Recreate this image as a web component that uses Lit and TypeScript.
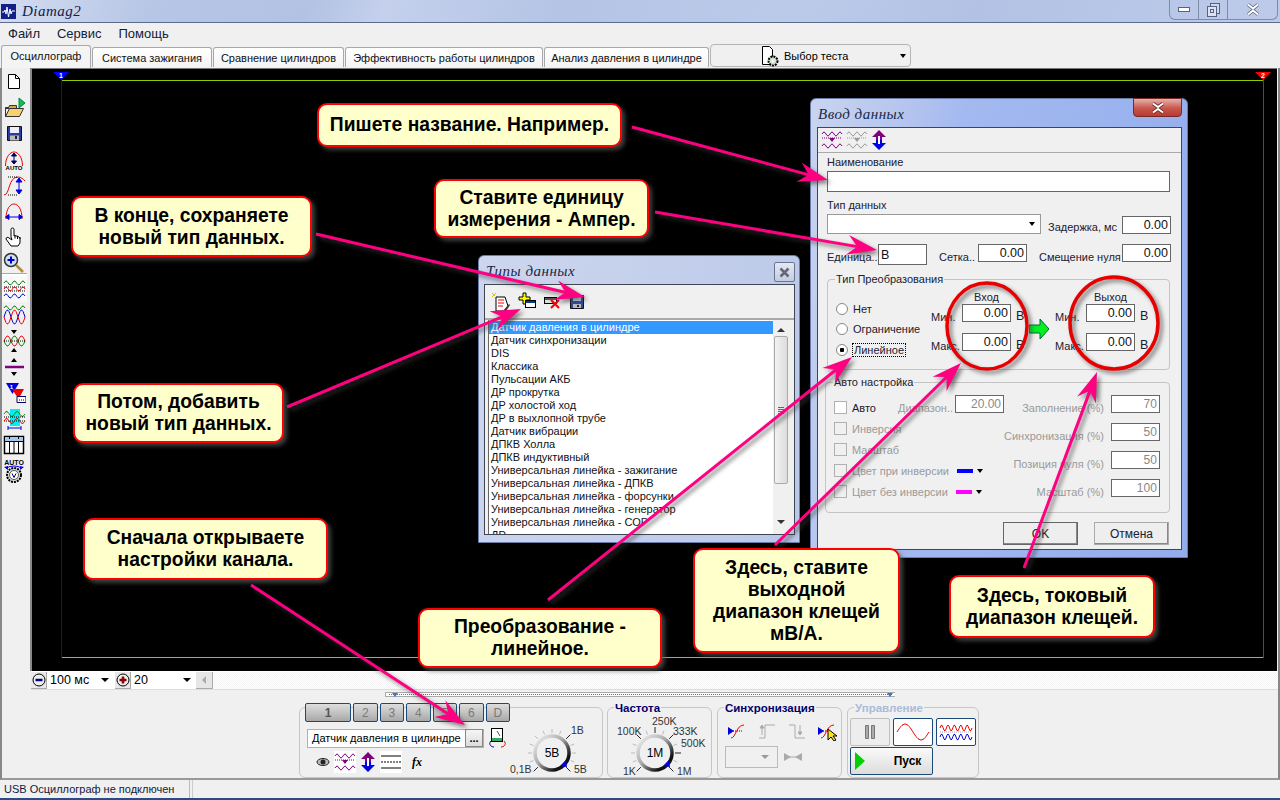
import { LitElement, html, css, svg } from "lit";
import { customElement } from "lit/decorators.js";

// sine path, sampled every pixel
const wave = (x: number, y: number, w: number, amp: number, periods: number, phase = 0) => {
  let d = "";
  for (let i = 0; i <= w; i++) {
    const v = y - Math.sin((i / w) * periods * Math.PI * 2 + phase) * amp;
    d += `${i ? "L" : "M"}${(x + i).toFixed(1)} ${v.toFixed(1)}`;
  }
  return d;
};

const ic = (size: number, body: unknown, h = size) =>
  html`<svg width=${size} height=${h} viewBox="0 0 ${size} ${h}">${body}</svg>`;

const threeWaves = (dim = false) => {
  const a = dim ? "#999" : "#800080";
  return ic(
    22,
    svg`<path d=${wave(1, 5, 20, 2, 2.5)} fill="none" stroke=${a}/>
      <path d="M1 9h20" stroke=${a} stroke-dasharray="1 1"/>
      <path d="M8 9h6l-3 4z" fill=${a}/>
      <path d=${wave(1, 17, 20, 2, 2.5)} fill="none" stroke=${a}/>`
  );
};

const updown = () =>
  ic(
    16,
    svg`<path d="M8 1l7 7h-4v3H5V8H1z" fill="#800080"/><path d="M8 21l7-7h-4v-3H5v3H1z" fill="#0000e0"/>
      <path d="M7 7h2v8H7z" fill="#fff"/>`,
    22
  );

const sideIcons = [
  svg`<path d="M6.5 5.5h7l4 4v10h-11z" fill="#fff" stroke="#000"/><path d="M13.5 5.5v4h4" fill="none" stroke="#000"/>`,
  svg`<path d="M3.5 12.5h3l1-2h7v3h-11z M3.5 21.5v-9" fill="#d9a93a" stroke="#333"/>
    <path d="M3.5 21.5l4-8h14l-4 8z" fill="#f6d071" stroke="#333"/><path d="M17 3l6 5-6 5z" fill="#10c040" stroke="#085"/>`,
  svg`<path d="M5.5 5.5h14v14h-14z" fill="#2b3c9f" stroke="#111"/><path d="M8 6h9v6H8z" fill="#eef"/>
    <path d="M8 14.500h9v5H8z" fill="#bbb"/><path d="M13 15h2v3h-2z" fill="#223"/>`,
  svg`<path d="M3.500 19C3.500 10 8 5 12 5s8.500 5 8.500 14" fill="none" stroke="#e00"/>
    <path d="M12 6.500v10M9.500 9L12 6l2.500 3zM9.500 14l2.500 3 2.500-3z" stroke="#006" fill="#006"/>
    <text x="12" y="23" class="tiny" text-anchor="middle">AUTO</text>`,
  svg`<path d="M2 22c6 0 4-18 14-18 3 0 5 2 7 4" fill="none" stroke="#e00"/><path d="M6 4h10M6 22h10" stroke="#000" stroke-dasharray="1 1"/>
    <path d="M17 6v14M14 9l3-4 3 4zM14 17l3 4 3-4z" stroke="#00d" fill="#00d"/>`,
  svg`<path d="M4 20C4 10 8 5 12 5s8 5 8 15" fill="none" stroke="#e00"/><path d="M4 18h16M7 15.500L3.500 18 7 20.500zM17 15.500l3.500 2.500-3.500 2.500z" stroke="#00d" fill="#00d"/>`,
  svg`<path d="M9 12V4.500a1.500 1.500 0 013 0V11l1-.5 1 .5 1 0 1 .5 1 .5 1 1v5l-2 3h-7l-5-7c0-2 2-2 3-1l3 2z" fill="#fff" stroke="#000"/>
    <path d="M13 10.500v3M15.500 11v3M18 12v2" stroke="#000" fill="none"/>`,
  svg`<circle cx="9" cy="9" r="6.500" fill="#cfe2f5" stroke="#333" stroke-width="1.500"/><path d="M9 5.500v7M5.500 9h7" stroke="#0000c0" stroke-width="2"/>
    <path d="M14 14l7 7" stroke="#b08b40" stroke-width="2.500"/>`,
  svg`<path d=${wave(2, 6, 21, 2, 2.5)} fill="none" stroke="#008000"/><path d="M2 10h21M2 14h21" stroke="#000" stroke-dasharray="1 1"/>
    <path d=${wave(2, 12, 21, 2, 2.5)} fill="none" stroke="#e00"/><path d=${wave(2, 19, 21, 2, 2.5)} fill="none" stroke="#00d"/>`,
  svg`<path d=${wave(2, 5, 21, 2, 2.5)} fill="none" stroke="#008000"/><path d=${wave(2, 14, 21, 7, 1.5)} fill="none" stroke="#00d"/>
    <path d=${wave(2, 14, 21, 7, 1.5, Math.PI)} fill="none" stroke="#e00"/>`,
  svg`<path d="M9 1h6l-3 4zM9 23h6l-3-4z" fill="#000"/><path d=${wave(2, 12, 21, 5, 1.5)} fill="none" stroke="#e00"/>
    <path d=${wave(2, 12, 21, 5, 1.5, Math.PI)} fill="none" stroke="#008000"/><path d="M2 12h21" stroke="#000" stroke-dasharray="1 1"/>`,
  svg`<path d="M9 7l3-4 3 4zM9 17l3 4 3-4z" fill="#000"/><path d="M3 12h19" stroke="#800080" stroke-width="2.500"/>`,
  svg`<path d="M4 2h13l-6.500 11z" fill="#0000e0"/><path d="M10 8h12l-5.500 10z" fill="#e00"/>
    <path d="M15 15.500h9v6h-9z" fill="#fff" stroke="#006"/><path d="M17 19h5" stroke="#006" stroke-dasharray="1 1"/>
    <text x="9.500" y="8" class="tiny w" text-anchor="middle">1</text>`,
  svg`<path d="M8 2h10v17H8z" fill="#00f0f0"/><path d=${wave(2, 7, 21, 2.500, 2)} fill="none" stroke="#008000"/>
    <path d="M2 10h21M2 14h21" stroke="#000" stroke-dasharray="1 1"/><path d=${wave(2, 14, 21, 2.500, 2)} fill="none" stroke="#e00"/>
    <path d="M6 21h13M6 19v4M19 19v4" stroke="#00d"/>`,
  svg`<path d="M2.500 3.500h19v17h-19z" fill="#fff" stroke="#000" stroke-width="1.500"/><path d="M3 4h18v4H3z" fill="#a8c8f0"/>
    <path d="M3 8.500h18M7.500 8v12M12 8v12M16.500 8v12M7.500 4v2M16.500 4v2" stroke="#000"/>`,
  svg`<text x="12" y="6" class="tiny l" text-anchor="middle">AUTO</text><path d="M4 9q8-4 16 0" fill="none" stroke="#00d"/>
    <path d="M2 8l4-1v4zM22 8l-4-1v4z" fill="#00d"/>
    <circle cx="12" cy="16" r="7" fill="#ddd" stroke="#000" stroke-width="2" stroke-dasharray="2 1"/><circle cx="12" cy="16" r="4.500" fill="#fff" stroke="#555"/>
    <path d="M10 14.500l2 4 2-4" fill="none" stroke="#006"/>`,
];

const knob = (cx: number, cy: number, w: number, h: number, center: string, labels: [string, number, number][], marks: number[]) =>
  html`<svg class="knob" width=${w} height=${h} viewBox="0 0 ${w} ${h}">
    <defs>
      <linearGradient id="ring" x1="0" y1="0" x2="1" y2="1">
        <stop offset="0" stop-color="#f4f4f4"/><stop offset=".45" stop-color="#aaa"/><stop offset=".8" stop-color="#111"/>
      </linearGradient>
    </defs>
    ${[-135, -112, -90, -68, -45, -22, 0, 22, 45, 68, 90, 112, 135].map((deg) => {
      const a = ((deg - 90) * Math.PI) / 180;
      const major = marks.includes(deg);
      const r2 = major ? 26 : 24;
      return svg`<line x1=${cx + Math.cos(a) * 20} y1=${cy + Math.sin(a) * 20} x2=${cx + Math.cos(a) * r2} y2=${cy + Math.sin(a) * r2}
        stroke=${major ? "#222" : "#bbb"}/>`;
    })}
    <circle cx=${cx} cy=${cy} r="17" fill="#f0f0f0" stroke="url(#ring)" stroke-width="3.500"/>
    <path d="M${cx + 8} ${cy + 13}l6-6 1 7z" fill="#0000e0"/>
    <text x=${cx} y=${cy + 4} class="kc" text-anchor="middle">${center}</text>
    ${labels.map(([t, x, y]) => svg`<text x=${x} y=${y} class="kl">${t}</text>`)}
  </svg>`;

const listRows = [
  "Датчик давления в цилиндре",
  "Датчик синхронизации",
  "DIS",
  "Классика",
  "Пульсации АКБ",
  "ДР прокрутка",
  "ДР холостой ход",
  "ДР в выхлопной трубе",
  "Датчик вибрации",
  "ДПКВ Холла",
  "ДПКВ индуктивный",
  "Универсальная линейка - зажигание",
  "Универсальная линейка - ДПКВ",
  "Универсальная линейка - форсунки",
  "Универсальная линейка - генератор",
  "Универсальная линейка - СОР",
  "ДР",
];

const callouts: { x: number; y: number; w: number; h: number; t: string[] }[] = [
  { x: 317, y: 103, w: 305, h: 44, t: ["Пишете название. Например."] },
  { x: 434, y: 179, w: 215, h: 59, t: ["Ставите единицу", "измерения - Ампер."] },
  { x: 71, y: 196, w: 241, h: 61, t: ["В конце, сохраняете", "новый тип данных."] },
  { x: 73, y: 383, w: 211, h: 60, t: ["Потом, добавить", "новый тип данных."] },
  { x: 83, y: 518, w: 245, h: 62, t: ["Сначала открываете", "настройки канала."] },
  { x: 418, y: 608, w: 244, h: 60, t: ["Преобразование -", "линейное."] },
  { x: 693, y: 548, w: 207, h: 105, t: ["Здесь, ставите", "выходной", "диапазон клещей", "мВ/А."] },
  { x: 949, y: 575, w: 206, h: 63, t: ["Здесь, токовый", "диапазон клещей."] },
];

const arrows = [
  [632, 127, 828, 180],
  [655, 212, 877, 250],
  [316, 234, 585, 297],
  [287, 407, 521, 309],
  [251, 585, 465, 725],
  [548, 600, 852, 357],
  [775, 545, 961, 363],
  [1024, 568, 1097, 372],
];

const arrow = ([x1, y1, x2, y2]: number[]) => {
  const l = Math.hypot(x2 - x1, y2 - y1);
  const ux = (x2 - x1) / l;
  const uy = (y2 - y1) / l;
  const p = (along: number, side: number) => `${x2 - ux * along - uy * side},${y2 - uy * along + ux * side}`;
  return svg`<line x1=${x1} y1=${y1} x2=${x2 - ux * 14} y2=${y2 - uy * 14} stroke="#ff0080" stroke-width="3"/>
    <polygon points="${p(0, 0)} ${p(30, 10)} ${p(20, 0)} ${p(30, -10)}" fill="#ff0080"/>`;
};

@customElement("app-root")
export class AppRoot extends LitElement {
  static styles = css`
    :host {
      display: block;
      width: 1280px;
      height: 800px;
      overflow: hidden;
      font-family: "Liberation Sans", Tahoma, sans-serif;
      font-size: 11px;
      color: #000;
      background: #f0f0f0;
    }
    .app {
      position: relative;
      display: flex;
      flex-direction: column;
      width: 1280px;
      height: 800px;
    }
    .tiny {
      font: bold 6px "Liberation Sans", sans-serif;
      fill: #000;
    }
    .tiny.w {
      fill: #fff;
    }
    .tiny.l {
      font-size: 7px;
    }

    /* window chrome */
    .title {
      flex: none;
      display: flex;
      align-items: flex-start;
      justify-content: space-between;
      height: 22px;
      border-bottom: 1px solid #5d6b8c;
      background: linear-gradient(108deg, #d3dcf0 0, #b7c6e6 12%, #b3c2e3 24%, #c4d0ec 30%, #b5c4e5 44%, #bccaea 62%, #b3c2e4 76%, #bdcaea 100%);
    }
    .title-left {
      display: flex;
      align-items: center;
      gap: 6px;
      height: 22px;
      padding-left: 1px;
    }
    .logo {
      display: block;
    }
    .app-name {
      font: italic 15px "Liberation Serif", serif;
      color: #10204a;
      letter-spacing: 0.5px;
    }
    .winbtns {
      display: flex;
      height: 19px;
      margin-right: 2px;
      border: 1px solid #7e8ca8;
      border-top: 0;
      border-radius: 0 0 6px 6px;
    }
    .winbtns > div {
      display: flex;
      align-items: center;
      justify-content: center;
      width: 28px;
      border-left: 1px solid #7e8ca8;
    }
    .winbtns > div:first-child {
      border-left: 0;
    }
    .winbtns > div:last-child {
      width: 49px;
    }
    .menu {
      flex: none;
      display: flex;
      gap: 17px;
      align-items: center;
      height: 21px;
      padding-left: 8px;
      font-size: 13px;
      color: #10203a;
    }
    .tabs {
      flex: none;
      display: flex;
      align-items: flex-end;
      height: 24px;
      padding-left: 1px;
      gap: 1px;
    }
    .tab {
      display: flex;
      align-items: center;
      justify-content: center;
      box-sizing: border-box;
      height: 20px;
      margin-bottom: 1px;
      background: linear-gradient(#fff, #f4f4f4);
      border: 1px solid #a8a8a8;
      border-bottom: 0;
      border-radius: 3px 3px 0 0;
      color: #111;
    }
    .tab.active {
      height: 23px;
      margin-bottom: 0;
      background: #f4f4f4;
      padding-bottom: 2px;
    }
    .test-pick {
      display: flex;
      align-items: center;
      width: 201px;
      height: 23px;
      box-sizing: border-box;
      align-self: flex-start;
      border: 1px solid #b4b4b4;
      border-radius: 4px;
      padding-left: 48px;
      gap: 3px;
    }
    .test-pick .caret {
      margin-left: auto;
      margin-right: 4px;
    }
    .caret {
      width: 0;
      height: 0;
      border: 3.500px solid transparent;
      border-top: 4px solid #000;
      border-bottom: 0;
      flex: none;
    }

    .main {
      flex: 1;
      display: flex;
      min-height: 0;
      border-left: 2px solid #888;
      border-right: 2px solid #888;
    }
    .sidebar {
      flex: none;
      display: flex;
      flex-direction: column;
      width: 28px;
    }
    .sb {
      display: flex;
      align-items: center;
      height: 26px;
      width: 25px;
    }
    .sb.sep {
      border-top: 2px solid #fff;
      box-shadow: 0 -1px 0 #aaa;
      margin-top: -2px;
      background: #f9f9f9;
    }
    .center {
      flex: 1;
      display: flex;
      flex-direction: column;
      min-width: 0;
    }
    .scope {
      flex: 1;
      position: relative;
      background: #000;
      border-top: 1px solid #777;
      border-left: 2px solid #888;
      margin-right: 1px;
    }
    .h-top,
    .h-bot {
      position: absolute;
      left: 30px;
      width: 1202px;
      height: 1px;
      background: #96c800;
    }
    .h-top {
      top: 11px;
    }
    .h-bot {
      top: 588px;
    }
    .v-l,
    .v-r {
      position: absolute;
      top: 6px;
      width: 1px;
      height: 583px;
    }
    .v-l {
      left: 29px;
      background: #0000ff;
    }
    .v-r {
      left: 1231px;
      background: #ff0000;
    }
    .mark {
      position: absolute;
      top: 3px;
      width: 16px;
      height: 8px;
      clip-path: polygon(0 0, 100% 0, 50% 100%);
      color: #fff;
      font: bold 7px/7px "Liberation Sans", sans-serif;
      text-align: center;
    }
    .mark.l {
      left: 21px;
      background: #0000ff;
    }
    .mark.r {
      left: 1223px;
      background: #ff0000;
    }
    .timebar {
      flex: none;
      display: flex;
      align-items: center;
      height: 18px;
      margin-left: 1px;
      border-bottom: 1px solid #ddd;
      background: #fff;
      font-size: 12.500px;
    }
    .tbtn {
      display: flex;
      align-items: center;
      justify-content: center;
      box-sizing: border-box;
      width: 16px;
      height: 17px;
      background: #e8e8e8;
      border-right: 1px solid #aaa;
      border-bottom: 1px solid #aaa;
    }
    .tval {
      display: flex;
      align-items: center;
      justify-content: space-between;
      width: 68px;
      padding: 0 6px 0 3px;
      box-sizing: border-box;
    }
    .tval.short {
      width: 65px;
      padding-right: 5px;
    }
    .tval .caret {
      border-width: 4px;
      border-top-width: 4px;
      border-bottom: 0;
    }
    .tscroll {
      flex: 1;
      height: 17px;
      background: repeating-conic-gradient(#f4f4f4 0 25%, #fff 0 50%) 0 0 / 2px 2px;
    }
    .tleft {
      display: flex;
      align-items: center;
      justify-content: center;
      box-sizing: border-box;
      width: 17px;
      height: 17px;
      background: #e6e6e6;
      border-right: 1px solid #aaa;
      border-bottom: 1px solid #aaa;
    }
    .tri-l {
      width: 0;
      height: 0;
      border: 4px solid transparent;
      border-right: 4px solid #aaa;
      border-left: 0;
    }

    /* bottom controls */
    .panel {
      flex: none;
      height: 90px;
      display: flex;
      flex-direction: column;
      border-left: 2px solid #888;
      border-right: 2px solid #888;
      border-bottom: 2px solid #999;
      box-sizing: border-box;
    }
    .range {
      align-self: flex-start;
      position: relative;
      margin: 2px 0 0 383px;
      width: 510px;
      height: 5px;
      box-sizing: border-box;
      border: 1px solid #aaa;
      border-right: 0;
      background: #fff;
    }
    .range::before {
      content: "";
      display: block;
      margin: 1px 3px;
      border-top: 1px dotted #3a78c8;
    }
    .rt {
      position: absolute;
      top: 0;
      width: 0;
      height: 0;
      border: 3px solid transparent;
      border-top: 4px solid #3a78c8;
      border-bottom: 0;
    }
    .rt.a {
      left: 6px;
    }
    .rt.b {
      right: 2px;
    }
    .groups {
      display: flex;
      gap: 4px;
      margin: 10px 0 0 297px;
      height: 71px;
    }
    .grp {
      position: relative;
      box-sizing: border-box;
      border: 1px solid #c6c6c6;
      border-radius: 6px;
      height: 71px;
    }
    .legend {
      position: absolute;
      top: -5px;
      left: 6px;
      padding: 0 1px;
      background: #f0f0f0;
      font: bold 11.500px/11px "Liberation Sans", sans-serif;
      color: #00006a;
    }
    .legend.off {
      color: #a9bcd8;
    }
    .g-ch {
      width: 304px;
      display: flex;
    }
    .g-fr {
      width: 105px;
    }
    .g-sy {
      width: 125px;
      margin-left: 1px;
    }
    .g-ct {
      width: 132px;
      margin-left: 1px;
    }
    .ch-left {
      flex: none;
      box-sizing: border-box;
      width: 210px;
      padding-left: 5px;
    }
    .ch-btns {
      display: flex;
      gap: 2px;
      margin-top: -5px;
    }
    .ch-btn {
      display: flex;
      align-items: center;
      justify-content: center;
      box-sizing: border-box;
      width: 25px;
      height: 19px;
      border: 1px solid #1c4a78;
      border-radius: 2px;
      background: linear-gradient(#dedede, #a8a8a8);
      color: #7a7a7a;
      font-size: 12px;
    }
    .ch-btn.first {
      width: 47px;
      color: #555;
      font-weight: bold;
    }
    .ch-row {
      display: flex;
      align-items: center;
      margin: 6px 0 0 2px;
      gap: 4px;
    }
    .combo {
      display: flex;
      align-items: center;
      justify-content: space-between;
      box-sizing: border-box;
      width: 177px;
      height: 19px;
      padding-left: 4px;
      border: 1px solid #b0b0b0;
      background: #fff;
      white-space: nowrap;
    }
    .dots {
      display: flex;
      align-items: center;
      justify-content: center;
      box-sizing: border-box;
      width: 18px;
      height: 18px;
      background: linear-gradient(#f6f6f6, #dcdcdc);
      border: 1px solid #888;
      font-weight: bold;
      line-height: 8px;
    }
    .ch-tools {
      display: flex;
      align-items: center;
      gap: 4px;
      margin: 3px 0 0 11px;
    }
    .ch-tools .on {
      background: #fff;
      display: flex;
    }
    .fx {
      font: italic bold 12px "Liberation Serif", serif;
      margin-left: 6px;
    }
    .knob {
      display: block;
    }
    .kc {
      font: 12px "Liberation Sans", sans-serif;
      fill: #000;
    }
    .kl {
      font: 10.500px "Liberation Sans", sans-serif;
      fill: #333;
    }
    .g-ch .knob {
      margin: 14px 0 0 0;
    }
    .sy-row {
      display: flex;
      align-items: center;
      gap: 10px;
      padding: 13px 0 0 9px;
    }
    .sy-row.two {
      padding: 5px 0 0 7px;
      gap: 5px;
    }
    .sy-combo {
      display: flex;
      align-items: center;
      justify-content: flex-end;
      box-sizing: border-box;
      width: 53px;
      height: 22px;
      padding-right: 8px;
      border: 1px solid #bbb;
    }
    .sy-combo .caret {
      border-top-color: #999;
      border-width: 4px;
      border-bottom: 0;
    }
    .ct {
      display: grid;
      grid-template-columns: 40px 40px 40px;
      gap: 1px 3px;
      padding: 10px 0 0 2px;
    }
    .ct-btn {
      display: flex;
      align-items: center;
      justify-content: center;
      box-sizing: border-box;
      height: 28px;
      border: 1px solid #1c4a78;
      border-radius: 2px;
      background: #fff;
    }
    .ct-btn.grey {
      border-color: #c0c0c0;
      background: #ededed;
    }
    .ct-btn.run {
      grid-column: span 2;
      height: 28px;
      gap: 28px;
      padding-right: 8px;
      background: linear-gradient(#fafafa, #dcdcdc);
      font-weight: bold;
      font-size: 12px;
    }
    .status {
      flex: none;
      height: 20px;
      display: flex;
      box-sizing: border-box;
      border-bottom: 2px solid #2c4a88;
      color: #10203a;
    }
    .status > div {
      display: flex;
      align-items: center;
      padding-left: 4px;
      border-right: 1px solid #bbb;
      width: 185px;
    }
    .status > div + div {
      width: auto;
      flex: 1;
      border-right: 0;
      border-left: 1px solid #ccc;
      margin-left: 2px;
    }

    /* windows, arrows and callouts sit over the scope */
    .dlg {
      position: absolute;
      box-sizing: border-box;
      display: flex;
      flex-direction: column;
      border: 1px solid #6a7da8;
      border-radius: 6px 6px 0 0;
    }
    .dlg-data {
      left: 810px;
      top: 98px;
      width: 378px;
      height: 460px;
      padding: 28px 5px 7px 6px;
      background: linear-gradient(100deg, #c9d4ef 0, #b4c4ee 22%, #a3b9f0 34%, #93adec 100%);
    }
    .dlg-types {
      left: 478px;
      top: 255px;
      width: 322px;
      height: 288px;
      padding: 28px 4px 7px 5px;
      background: linear-gradient(100deg, #cdd6ee, #bac8e8);
    }
    .dlg-title {
      position: absolute;
      top: 7px;
      left: 7px;
      font: italic 15px "Liberation Serif", serif;
      color: #182848;
      letter-spacing: 0.5px;
    }
    .x-red {
      position: absolute;
      top: -1px;
      right: 5px;
      display: flex;
      align-items: center;
      justify-content: center;
      width: 49px;
      height: 19px;
      border-radius: 0 0 4px 4px;
      border: 1px solid #7a2a24;
      box-sizing: border-box;
      background: linear-gradient(#e6b1ab, #c8564c 55%, #b83a32);
    }
    .x-grey {
      position: absolute;
      top: 6px;
      right: 4px;
      display: flex;
      align-items: center;
      justify-content: center;
      box-sizing: border-box;
      width: 21px;
      height: 20px;
      border: 1px solid #6a7590;
      border-radius: 2px;
      background: linear-gradient(#e4e8f2, #c4cce0);
    }
    .dlg-body {
      flex: 1;
      min-height: 0;
      display: flex;
      flex-direction: column;
      background: #f0f0f0;
      border: 1px solid #3e4656;
    }
    .dlg-tools {
      flex: none;
      display: flex;
      align-items: center;
      gap: 3px;
      height: 24px;
      padding-left: 3px;
      border-bottom: 1px solid #aaa;
    }
    .form {
      display: flex;
      flex-direction: column;
      padding: 0 12px 0 9px;
      color: #1a2030;
    }
    .lab {
      line-height: 14px;
      margin-top: 2px;
    }
    .lab.second {
      margin-top: 6px;
    }
    .inp {
      display: flex;
      align-items: center;
      justify-content: flex-end;
      box-sizing: border-box;
      width: 49px;
      height: 18px;
      padding: 0 2px;
      background: #fff;
      border: 1px solid #666;
      font-size: 12.500px;
      color: #111;
      flex: none;
    }
    .inp.wide {
      width: 343px;
      height: 21px;
      margin-top: 2px;
    }
    .inp.unit-in {
      justify-content: flex-start;
      height: 21px;
    }
    .row {
      display: flex;
      align-items: flex-end;
    }
    .row.top {
      align-items: flex-start;
      margin-top: 10px;
    }
    .row.top .inp + .cap {
      margin-left: 12px;
    }
    .cap {
      line-height: 14px;
      white-space: nowrap;
      flex: none;
    }
    .row.top .cap {
      padding-top: 6px;
    }
    .cmb {
      display: flex;
      align-items: center;
      justify-content: flex-end;
      flex: none;
      box-sizing: border-box;
      width: 214px;
      height: 20px;
      padding-right: 5px;
      background: #fff;
      border: 1px solid #999;
      margin-top: 2px;
    }
    .box {
      position: relative;
      flex: none;
      border: 1px solid #c4c4c4;
      border-radius: 4px;
      box-sizing: border-box;
    }
    .box > .cap-t {
      position: absolute;
      top: -7px;
      left: 7px;
      padding: 0 1px;
      line-height: 13px;
      background: #f0f0f0;
    }
    .conv {
      display: flex;
      height: 91px;
      margin-top: 14px;
      width: 343px;
    }
    .radios {
      display: flex;
      flex-direction: column;
      gap: 7px;
      width: 103px;
      padding: 22px 0 0 8px;
      box-sizing: border-box;
    }
    .rad {
      display: flex;
      align-items: center;
      gap: 5px;
      height: 13.500px;
    }
    .dot {
      box-sizing: border-box;
      width: 12px;
      height: 12px;
      border-radius: 50%;
      border: 1px solid #888;
      background: #fff;
    }
    .dot.on {
      background: radial-gradient(circle, #000 0 2px, #fff 2.500px);
    }
    .focus {
      outline: 1px dotted #000;
      padding: 0 1px;
    }
    .conv-col {
      display: flex;
      flex-direction: column;
      padding-top: 10px;
      box-sizing: border-box;
    }
    .conv-col .head {
      width: 49px;
      margin-left: 31px;
      height: 14px;
      line-height: 14px;
      text-align: center;
    }
    .conv-grid {
      display: grid;
      grid-template-columns: 31px 49px 16px;
      grid-auto-rows: 18px;
      row-gap: 11px;
      align-items: center;
    }
    .conv-grid .side {
      align-self: end;
      line-height: 12px;
      margin-bottom: -1px;
    }
    .unit {
      padding-left: 5px;
      font-size: 12.500px;
      align-self: end;
      line-height: 12px;
    }
    .conv-arrow {
      width: 20px;
      margin: 39px 6px 0 2px;
    }
    .auto {
      display: grid;
      grid-template-columns: 60px 110px 1fr;
      height: 131px;
      width: 345px;
      margin: 12px 0 0 -2px;
      padding: 12px 13px 0 8px;
      color: #9a9a9a;
    }
    .auto .cap-t {
      color: #1a2030;
    }
    .cbs {
      padding-top: 2px;
      white-space: nowrap;
    }
    .cb {
      display: flex;
      align-items: center;
      gap: 5px;
      height: 21px;
    }
    .cb > i.check {
      flex: none;
      box-sizing: border-box;
      width: 13px;
      height: 13px;
      border: 1px solid #b0b0b0;
    }
    .cb.on {
      color: #1a2030;
    }
    .cb.on > i.check {
      background: #fff;
    }
    .swatch {
      flex: none;
      width: 16px;
      height: 4px;
      margin-left: 3px;
    }
    .swatch.blue {
      background: #0000ff;
    }
    .swatch.pink {
      background: #ff00ff;
    }
    .cb .caret {
      border-width: 3px;
      border-top-width: 4px;
      border-bottom: 0;
      margin-left: -1px;
    }
    .mid {
      display: flex;
      align-items: flex-start;
      justify-content: flex-end;
      gap: 2px;
    }
    .mid .cap,
    .rcol .cap {
      line-height: 26px;
    }
    .rcol {
      display: flex;
      flex-direction: column;
      gap: 10px;
    }
    .rcol > div {
      display: flex;
      justify-content: flex-end;
      gap: 7px;
      height: 18px;
    }
    .auto .inp {
      color: #888;
      font-size: 12px;
    }
    .dlg-btns {
      display: flex;
      justify-content: flex-end;
      gap: 16px;
      margin-top: 9px;
    }
    .pbtn {
      display: flex;
      align-items: center;
      justify-content: center;
      box-sizing: border-box;
      width: 75px;
      height: 23px;
      background: #eee;
      border: 1px solid #aaa;
      box-shadow: inset -1px -1px 0 #888;
      font-size: 12px;
    }
    .pbtn.def {
      border: 1px solid #666;
    }
    .t-tools {
      flex: none;
      display: flex;
      align-items: center;
      gap: 6px;
      height: 33px;
      padding-left: 6px;
      border-bottom: 2px solid #aaa;
    }
    .t-main {
      flex: 1;
      min-height: 0;
      display: flex;
      margin: 0 5px 0 3px;
      background: #fff;
      border-left: 1px solid #666;
    }
    .t-list {
      flex: 1;
      overflow: hidden;
      padding-top: 1px;
    }
    .t-list > div {
      height: 13px;
      line-height: 13px;
      padding-left: 2px;
      color: #111;
      white-space: nowrap;
    }
    .t-list > div.sel {
      background: #3399ff;
      color: #fff;
    }
    .t-bar {
      flex: none;
      display: flex;
      flex-direction: column;
      align-items: center;
      width: 16px;
      background: #f0f0f0;
      box-sizing: border-box;
    }
    .t-thumb {
      position: relative;
      width: 14px;
      height: 148px;
      margin-top: 4px;
      box-sizing: border-box;
      border: 1px solid #aaa;
      border-radius: 2px;
      background: linear-gradient(90deg, #f2f2f2, #dcdcdc);
    }
    .t-thumb::after {
      content: "";
      position: absolute;
      left: 3px;
      top: 70px;
      width: 6px;
      height: 7px;
      background: repeating-linear-gradient(#666 0 1px, transparent 1px 2px);
    }
    .t-arr {
      width: 0;
      height: 0;
      margin-top: 8px;
      border: 4px solid transparent;
      border-bottom: 4px solid #333;
      border-top: 0;
    }
    .t-arr.d {
      margin-top: auto;
      margin-bottom: 10px;
      border-bottom: 0;
      border-top: 4px solid #333;
    }
    .overlay {
      position: absolute;
      left: 0;
      top: 0;
      width: 1280px;
      height: 800px;
      pointer-events: none;
    }
    .marks {
      position: absolute;
      left: 0;
      top: 0;
      filter: drop-shadow(3px 3px 2px rgba(60, 60, 60, 0.65));
    }
    .call {
      position: absolute;
      box-sizing: border-box;
      display: flex;
      flex-direction: column;
      align-items: center;
      justify-content: center;
      background: #ffffcc;
      border: 2px solid #ff0000;
      border-radius: 10px;
      box-shadow: 3px 3px 4px rgba(90, 90, 90, 0.7);
      font: bold 19.300px/22px "Liberation Sans", sans-serif;
      color: #000;
      white-space: nowrap;
      text-align: center;
    }
  `;

  private renderTitle() {
    return html`<header class="title">
      <div class="title-left">
        <svg class="logo" width="15" height="15" viewBox="0 0 15 15">
          <rect width="15" height="15" fill="#12208a"/>
          <path d="M1 8h2l1-2 1 4 1-7 1.500 10 1.500-8 1 5 1-3h3" fill="none" stroke="#fff"/>
        </svg>
        <span class="app-name">Diamag2</span>
      </div>
      <div class="winbtns">
        <div><svg width="12" height="6"><rect x=".5" y=".5" width="11" height="4" fill="#fff" stroke="#56627e"/></svg></div>
        <div>
          <svg width="13" height="14"><rect x="3.500" y=".5" width="9" height="10" fill="#cfd8ec" stroke="#56627e"/>
          <rect x=".5" y="3.500" width="9" height="10" fill="#dde3f2" stroke="#56627e"/><rect x="3.500" y="6.500" width="3" height="3" fill="none" stroke="#56627e"/></svg>
        </div>
        <div>
          <svg width="14" height="13"><path d="M2 1.500l5 4 5-4M2 11.500l5-4 5 4" fill="none" stroke="#56627e" stroke-width="3.500"/>
          <path d="M2 1.500l5 4 5-4M2 11.500l5-4 5 4" fill="none" stroke="#fff" stroke-width="2"/></svg>
        </div>
      </div>
    </header>`;
  }

  private renderTabs() {
    const tabs: [string, number][] = [
      ["Система зажигания", 120],
      ["Сравнение цилиндров", 131],
      ["Эффективность работы цилиндров", 198],
      ["Анализ давления в цилиндре", 165],
    ];
    return html`<div class="tabs">
      <div class="tab active" style="width:90px">Осциллограф</div>
      ${tabs.map(([t, w]) => html`<div class="tab" style="width:${w}px">${t}</div>`)}
      <div class="test-pick">
        ${ic(
          22,
          svg`<path d="M3.500 1.500h7l3 3v15h-10z" fill="#fff" stroke="#000"/>
          <circle cx="14" cy="16" r="4.500" fill="#cfe0cf" stroke="#000" stroke-dasharray="2 1" stroke-width="2"/><circle cx="14" cy="16" r="1.500" fill="#fff"/>`
        )}
        <span>Выбор теста</span><i class="caret"></i>
      </div>
    </div>`;
  }

  private renderSidebar() {
    return html`<aside class="sidebar">
      ${sideIcons.map((b, i) => html`<div class="sb ${i === 8 ? "sep" : ""}">${ic(24, b)}</div>`)}
    </aside>`;
  }

  private renderScope() {
    return html`<div class="center">
      <div class="scope">
        <div class="h-top"></div>
        <div class="h-bot"></div>
        <div class="v-l"></div>
        <div class="v-r"></div>
        <div class="mark l">1</div>
        <div class="mark r">2</div>
      </div>
      <div class="timebar">
        <div class="tbtn">
          ${ic(14, svg`<circle cx="7" cy="7" r="6" fill="#eee" stroke="#000"/><path d="M3.500 7h7" stroke="#00008a" stroke-width="2.500"/>`)}
        </div>
        <div class="tval"><span>100 мс</span><i class="caret"></i></div>
        <div class="tbtn">
          ${ic(14, svg`<circle cx="7" cy="7" r="6" fill="#eee" stroke="#000"/><path d="M3.500 7h7M7 3.500v7" stroke="#8a0000" stroke-width="2.500"/>`)}
        </div>
        <div class="tval short"><span>20</span><i class="caret"></i></div>
        <div class="tleft"><i class="tri-l"></i></div>
        <div class="tscroll"></div>
      </div>
    </div>`;
  }

  private renderPanel() {
    const syncCurve = "M4 17c5 0 5-13 13-13";
    return html`<section class="panel">
      <div class="range"><i class="rt a"></i><i class="rt b"></i></div>
      <div class="groups">
        <div class="grp g-ch">
          <div class="ch-left">
            <div class="ch-btns">
              ${["1", "2", "3", "4", "5", "6", "D"].map(
                (c, i) => html`<div class="ch-btn ${i === 0 ? "first" : ""}">${c}</div>`
              )}
            </div>
            <div class="ch-row">
              <div class="combo"><span>Датчик давления в цилиндре</span><span class="dots">...</span></div>
              ${ic(
                20,
                svg`<rect x="3.500" y=".5" width="11" height="13" fill="#fff" stroke="#000"/><path d="M4 10h10v3H4z" fill="#3a6"/>
                <path d="M9 3l3 5" stroke="#555"/><path d="M3 13c-3 3 0 6 3 6" fill="none" stroke="#00a"/><path d="M16 13c3 3 0 6-3 6" fill="none" stroke="#e00"/>`
              )}
            </div>
            <div class="ch-tools">
              ${ic(
                14,
                svg`<ellipse cx="7" cy="7" rx="6" ry="3.500" fill="#bbb" stroke="#222"/><circle cx="7" cy="7" r="2.500" fill="#222"/>`
              )}
              <span class="on">${threeWaves()}</span>
              ${updown()}
              <span class="on">${ic(22, svg`<path d="M1 5h20M1 17h20" stroke="#000"/><path d="M1 11h20" stroke="#000" stroke-dasharray="2 1"/>`)}</span>
              <span class="fx">fx</span>
            </div>
          </div>
          ${knob(42, 31, 86, 55, "5В", [["0,1В", 0, 51], ["1В", 61, 12], ["5В", 64, 51]], [-135, 45, 135])}
        </div>
        <div class="grp g-fr">
          <span class="legend">Частота</span>
          ${knob(47, 45, 103, 68, "1М", [["100K", 9, 27], ["250K", 44, 17], ["333K", 65, 27], ["500K", 73, 39], ["1K", 15, 67], ["1M", 69, 67]], [-135, -45, 0, 45, 90, 135])}
        </div>
        <div class="grp g-sy">
          <span class="legend">Синхронизация</span>
          <div class="sy-row">
            ${ic(20, svg`<path d=${syncCurve} fill="none" stroke="#e00"/><path d="M1 6l6 4-6 4z" fill="#00d"/><path d="M6 10h10" stroke="#00d" stroke-dasharray="1 1"/>`)}
            ${ic(20, svg`<path d="M2 17h6V4h10" fill="none" stroke="#aaa"/><path d="M5 5v9M3 7l2-3 2 3z" stroke="#aaa" fill="#aaa"/>`)}
            ${ic(20, svg`<path d="M2 4h6v13h10" fill="none" stroke="#aaa"/><path d="M13 4v9M11 11l2 3 2-3z" stroke="#aaa" fill="#aaa"/>`)}
            ${ic(
              20,
              svg`<path d=${syncCurve} fill="none" stroke="#e00"/><path d="M1 6l6 4-6 4z" fill="#00d"/><path d="M6 10h6" stroke="#00d" stroke-dasharray="1 1"/>
              <path d="M11 8v11l3-3 3 4 2-1-3-4h4z" fill="#ffe020" stroke="#000"/>`
            )}
          </div>
          <div class="sy-row two">
            <div class="sy-combo"><i class="caret"></i></div>
            ${ic(20, svg`<path d="M1 6l7 4-7 4zM19 6l-7 4 7 4z" fill="#aaa"/><path d="M1 10h18" stroke="#aaa"/>`)}
          </div>
        </div>
        <div class="grp g-ct">
          <span class="legend off">Управление</span>
          <div class="ct">
            <div class="ct-btn grey">${ic(14, svg`<path d="M2.500 1.500h3v13h-3zM8.500 1.500h3v13h-3z" fill="#aaa" stroke="#777"/>`, 16)}</div>
            <div class="ct-btn">${ic(34, svg`<path d=${wave(1, 10, 32, 8, 1)} fill="none" stroke="#e00"/>`, 20)}</div>
            <div class="ct-btn">
              ${ic(
                34,
                svg`<path d=${wave(1, 6, 32, 3, 5)} fill="none" stroke="#e00"/><path d="M1 10h32" stroke="#aaa" stroke-dasharray="1 1"/><path d=${wave(1, 15, 32, 3, 5)} fill="none" stroke="#00d"/>`,
                20
              )}
            </div>
            <div class="ct-btn run">${ic(12, svg`<path d="M1 1l10 9-10 9z" fill="#00d000"/>`, 20)}<span>Пуск</span></div>
          </div>
        </div>
      </div>
    </section>`;
  }

  private renderDataDialog() {
    const conv = (title: string, arrowAfter: boolean) => html`<div class="conv-col">
        <span class="head">${title}</span>
        <div class="conv-grid">
          <span class="side">Мин.</span><span class="inp">0.00</span><span class="unit">В</span>
          <span class="side">Макс.</span><span class="inp">0.00</span><span class="unit">В</span>
        </div>
      </div>
      ${arrowAfter
        ? html`<span class="conv-arrow">${ic(20, svg`<path d="M0 6h11V0l9 10-9 10v-6H0z" fill="#00f020" stroke="#064"/>`)}</span>`
        : ""}`;
    return html`<div class="dlg dlg-data">
      <span class="dlg-title">Ввод данных</span>
      <span class="x-red">
        <svg width="16" height="12"><path d="M3 1.500l5 3.500 5-3.500M3 10.500l5-3.500 5 3.500" fill="none" stroke="#6a2a28" stroke-width="3.500"/>
        <path d="M3 1.500l5 3.500 5-3.500M3 10.500l5-3.500 5 3.500" fill="none" stroke="#fff" stroke-width="2"/></svg>
      </span>
      <div class="dlg-body">
        <div class="dlg-tools">${threeWaves()}${threeWaves(true)}${updown()}</div>
        <div class="form">
          <span class="lab">Наименование</span>
          <div class="inp wide"></div>
          <span class="lab second">Тип данных</span>
          <div class="row">
            <div class="cmb"><i class="caret"></i></div>
            <span class="cap" style="margin-left:7px;width:74px">Задержка, мс</span>
            <span class="inp">0.00</span>
          </div>
          <div class="row top">
            <span class="cap" style="width:51px">Единица..</span>
            <span class="inp unit-in">В</span>
            <span class="cap" style="width:39px">Сетка..</span>
            <span class="inp">0.00</span>
            <span class="cap" style="width:83px">Смещение нуля</span>
            <span class="inp">0.00</span>
          </div>
          <div class="box conv">
            <span class="cap-t">Тип Преобразования</span>
            <div class="radios">
              <div class="rad"><i class="dot"></i>Нет</div>
              <div class="rad"><i class="dot"></i>Ограничение</div>
              <div class="rad"><i class="dot on"></i><span class="focus">Линейное</span></div>
            </div>
            ${conv("Вход", true)}${conv("Выход", false)}
          </div>
          <div class="box auto">
            <span class="cap-t">Авто настройка</span>
            <div class="cbs">
              <div class="cb on"><i class="check"></i>Авто</div>
              <div class="cb"><i class="check"></i>Инверсия</div>
              <div class="cb"><i class="check"></i>Масштаб</div>
              <div class="cb"><i class="check"></i>Цвет при инверсии<b class="swatch blue"></b><i class="caret"></i></div>
              <div class="cb"><i class="check"></i>Цвет без инверсии<b class="swatch pink"></b><i class="caret"></i></div>
            </div>
            <div class="mid"><span class="cap">Диапазон..</span><span class="inp">20.00</span></div>
            <div class="rcol">
              ${[["Заполнение (%)", "70"], ["Синхронизация (%)", "50"], ["Позиция нуля (%)", "50"], ["Масштаб (%)", "100"]].map(
                ([l, v]) => html`<div><span class="cap">${l}</span><span class="inp">${v}</span></div>`
              )}
            </div>
          </div>
          <div class="dlg-btns"><span class="pbtn def">OK</span><span class="pbtn">Отмена</span></div>
        </div>
      </div>
    </div>`;
  }

  private renderTypesDialog() {
    return html`<div class="dlg dlg-types">
      <span class="dlg-title">Типы данных</span>
      <span class="x-grey">
        <svg width="11" height="11"><path d="M1.500 1.500l8 8M9.500 1.500l-8 8" stroke="#667" stroke-width="2.500"/></svg>
      </span>
      <div class="dlg-body">
        <div class="t-tools">
          ${ic(
            20,
            svg`<path d="M5 5h9l3 9-4 5H5z" fill="#fff" stroke="#000"/><path d="M7 8h6M7 11h6M7 14h5" stroke="#e00"/><path d="M1 1l3 3M5 1L1 5" stroke="#cc0"/><path d="M13 18l5-6 1 1-4 6z" fill="#333"/>`
          )}
          ${ic(
            20,
            svg`<path d="M6 1h3v4h4v3H9v4H6V8H2V5h4z" fill="#ff0" stroke="#000"/><rect x="8.500" y="8.500" width="10" height="7" fill="#fff" stroke="#000"/><path d="M9 9h9v2H9z" fill="#003c8a"/>`
          )}
          ${ic(
            20,
            svg`<rect x="1.500" y="5.500" width="12" height="6" fill="#ddd" stroke="#000"/><path d="M2 6h11v2H2z" fill="#555"/><path d="M8 8l8 8M16 8l-8 8" stroke="#e00" stroke-width="2"/>`
          )}
          ${ic(
            16,
            svg`<path d="M1.500 1.500h13v13h-13z" fill="#2b4ca8" stroke="#111"/><path d="M4 2h8v5H4z" fill="#ddeaff"/><path d="M4 10h8v4H4z" fill="#bbb"/><path d="M8 11h2v2H8z" fill="#223"/>`
          )}
        </div>
        <div class="t-main">
          <div class="t-list">
            ${listRows.map((r, i) => html`<div class=${i === 0 ? "sel" : ""}>${r}</div>`)}
          </div>
          <div class="t-bar"><i class="t-arr"></i><div class="t-thumb"></div><i class="t-arr d"></i></div>
        </div>
      </div>
    </div>`;
  }

  render() {
    return html`<div class="app">
      ${this.renderTitle()}
      <nav class="menu"><span>Файл</span><span>Сервис</span><span>Помощь</span></nav>
      ${this.renderTabs()}
      <div class="main">${this.renderSidebar()}${this.renderScope()}</div>
      ${this.renderPanel()}
      <footer class="status"><div>USB Осциллограф не подключен</div><div></div></footer>
      <div class="overlay">
        ${this.renderTypesDialog()}${this.renderDataDialog()}
        <svg class="marks" width="1280" height="800" viewBox="0 0 1280 800">
          ${arrows.map(arrow)}
          <ellipse cx="987" cy="326" rx="40" ry="43" fill="none" stroke="#e80000" stroke-width="3.500"/>
          <ellipse cx="1114" cy="323" rx="44" ry="46" fill="none" stroke="#e80000" stroke-width="3.500"/>
        </svg>
        ${callouts.map(
          (c) => html`<div class="call" style="left:${c.x}px;top:${c.y}px;width:${c.w}px;height:${c.h}px">
            ${c.t.map((l) => html`<span>${l}</span>`)}
          </div>`
        )}
      </div>
    </div>`;
  }
}
